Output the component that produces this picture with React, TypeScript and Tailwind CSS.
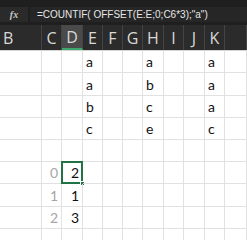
const cols = [
  { name: "B", w: "w-[42px]", align: "justify-start pl-[3px]" },
  { name: "C", w: "w-[20px]", align: "justify-center" },
  { name: "D", w: "w-[21px]", align: "justify-center" },
  { name: "E", w: "w-[20px]", align: "justify-center" },
  { name: "F", w: "w-[20px]", align: "justify-center" },
  { name: "G", w: "w-[20px]", align: "justify-center" },
  { name: "H", w: "w-[21px]", align: "justify-center" },
  { name: "I", w: "w-[20px]", align: "justify-center" },
  { name: "J", w: "w-[21px]", align: "justify-center" },
  { name: "K", w: "w-[20px]", align: "justify-center" },
  { name: "", w: "w-[22px]", align: "justify-center" },
];

// cell contents per row, keyed by column index
const rows: { h: string; cells: Record<number, string> }[] = [
  { h: "h-[22px]", cells: { 3: "a", 6: "a", 9: "a" } },
  { h: "h-[23px]", cells: { 3: "a", 6: "b", 9: "a" } },
  { h: "h-[22px]", cells: { 3: "b", 6: "c", 9: "a" } },
  { h: "h-[22px]", cells: { 3: "c", 6: "e", 9: "c" } },
  { h: "h-[22px]", cells: {} },
  { h: "h-[22px]", cells: { 1: "0", 2: "2" } },
  { h: "h-[23px]", cells: { 1: "1", 2: "1" } },
  { h: "h-[22px]", cells: { 1: "2", 2: "3" } },
  { h: "h-[22px]", cells: {} },
];

function Cell({ col, value, selected }: { col: number; value?: string; selected?: boolean }) {
  const isIndex = col === 1;
  const isNum = col === 2;
  return (
    <div
      className={`relative ${cols[col].w} h-full shrink-0 border-r border-b border-[#e1e1e1] flex items-end pb-[2px] ${
        isIndex || isNum ? "justify-end pr-[3px]" : "justify-start pl-[3px]"
      }`}
    >
      <span className={`text-[14px] leading-[16px] ${isIndex ? "text-[#a6a6a6]" : "text-[#111]"}`}>{value}</span>
      {selected && (
        <>
          <div className="absolute -left-px -top-px -right-px -bottom-px border-2 border-[#217346]" />
          <div className="absolute -right-[3px] -bottom-[3px] w-[5px] h-[5px] bg-[#217346] border border-white" />
        </>
      )}
    </div>
  );
}

export default function App() {
  return (
    <div className="w-[247px] h-[240px] overflow-hidden bg-white" style={{ fontFamily: "Lato, 'Open Sans', sans-serif" }}>
      {/* formula bar */}
      <div className="h-[25px] bg-[#1f1f1f] pt-[7px]">
        <div className="flex h-[15px] gap-[2px]">
          <div className="w-[28px] bg-[#2a2a2a] flex items-center justify-center">
            <span className="text-[10px] italic font-bold text-[#c8c8c8] font-['Liberation_Serif',serif]">fx</span>
          </div>
          <div className="flex-1 bg-[#262626] flex items-center pl-[7px]">
            <span className="text-[10px] text-[#e6e6e6] font-['Liberation_Sans',sans-serif] whitespace-nowrap">
              =COUNTIF( OFFSET(E:E;0;C6*3);"a")
            </span>
          </div>
        </div>
      </div>

      {/* column headers */}
      <div className="flex h-[26px] bg-[#2b2b2b] border-b border-[#d4d4d4]">
        {cols.map((c, i) => (
          <div
            key={i}
            className={`${c.w} h-full shrink-0 flex items-center ${c.align} border-r border-[#444] ${
              c.name === "D" ? "bg-[#4a4a4a] border-b-2 border-b-[#3fa66b]" : ""
            }`}
            style={{ fontFamily: "'Open Sans', sans-serif" }}
          >
            <span className="text-[16px] text-[#d8d8d8]">{c.name}</span>
          </div>
        ))}
      </div>

      {/* grid */}
      {rows.map((r, ri) => (
        <div key={ri} className={`flex ${r.h}`}>
          {cols.map((_, ci) => (
            <Cell key={ci} col={ci} value={r.cells[ci]} selected={ri === 5 && ci === 2} />
          ))}
        </div>
      ))}
    </div>
  );
}
